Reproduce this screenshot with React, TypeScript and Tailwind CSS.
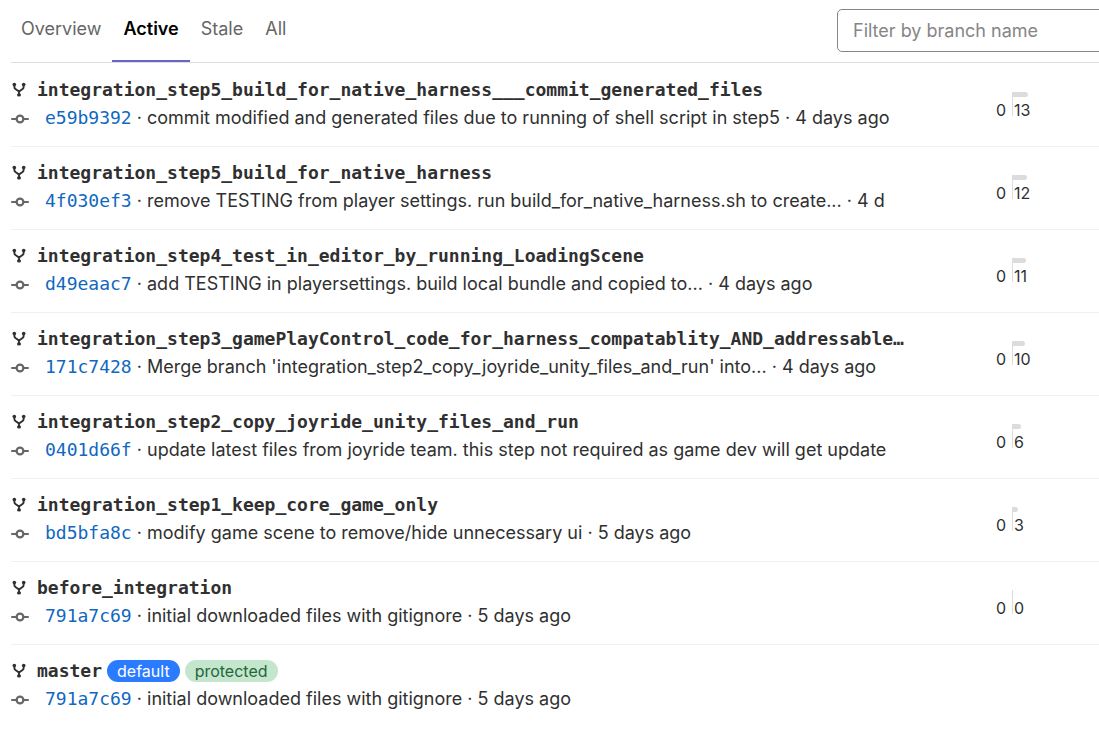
type Branch = {
  name: string;
  sha: string;
  message: string;
  age: string;
  ahead?: number;
  labels?: boolean;
};

const branches: Branch[] = [
  { name: "integration_step5_build_for_native_harness___commit_generated_files", sha: "e59b9392", message: "commit modified and generated files due to running of shell script in step5", age: "4 days ago", ahead: 13 },
  { name: "integration_step5_build_for_native_harness", sha: "4f030ef3", message: "remove TESTING from player settings. run build_for_native_harness.sh to create...", age: "4 d", ahead: 12 },
  { name: "integration_step4_test_in_editor_by_running_LoadingScene", sha: "d49eaac7", message: "add TESTING in playersettings. build local bundle and copied to...", age: "4 days ago", ahead: 11 },
  { name: "integration_step3_gamePlayControl_code_for_harness_compatablity_AND_addressable…", sha: "171c7428", message: "Merge branch 'integration_step2_copy_joyride_unity_files_and_run' into...", age: "4 days ago", ahead: 10 },
  { name: "integration_step2_copy_joyride_unity_files_and_run", sha: "0401d66f", message: "update latest files from joyride team. this step not required as game dev will get update", age: "", ahead: 6 },
  { name: "integration_step1_keep_core_game_only", sha: "bd5bfa8c", message: "modify game scene to remove/hide unnecessary ui", age: "5 days ago", ahead: 3 },
  { name: "before_integration", sha: "791a7c69", message: "initial downloaded files with gitignore", age: "5 days ago", ahead: 0 },
  { name: "master", sha: "791a7c69", message: "initial downloaded files with gitignore", age: "5 days ago", labels: true },
];

const tabs = ["Overview", "Active", "Stale", "All"];

function BranchIcon() {
  return (
    <svg className="h-4 w-4 shrink-0 text-[#303030]" viewBox="0 0 16 16" fill="none" aria-hidden="true">
      <path d="M3.4 3v1.9c0 1 .3 1.6 1.1 2.2L8 9.6l3.5-2.5c.8-.6 1.1-1.2 1.1-2.2V3M8 9V13.5" stroke="currentColor" strokeWidth="1.9" />
      <circle cx="3.3" cy="2.6" r="1.8" fill="currentColor" />
      <circle cx="12.7" cy="2.6" r="1.8" fill="currentColor" />
      <ellipse cx="8" cy="12.9" rx="2" ry="1.6" fill="currentColor" />
    </svg>
  );
}

function CommitIcon() {
  return (
    <svg className="h-[18px] w-[18px] shrink-0 text-[#666666]" viewBox="0 0 18 18" fill="none" aria-hidden="true">
      <path d="M1 9h4.8M12.2 9H17" stroke="currentColor" strokeWidth="2" strokeLinecap="round" />
      <circle cx="9" cy="9" r="3.4" stroke="currentColor" strokeWidth="2.2" />
    </svg>
  );
}

function Divergence({ ahead }: { ahead: number }) {
  return (
    <div className="flex h-6 text-base leading-6 text-[#303030]">
      <span className="w-[26px] pt-1.5 pr-1.5 text-right">0</span>
      <div className="relative border-l border-[#dcdcdc] pl-px">
        <div
          className="absolute top-0 left-0 h-[5px] rounded-r-full bg-[#dcdcdc]"
          style={{ width: ahead === 0 ? 0 : Math.round(ahead + 1.6) }}
        />
        <span className="block pt-1.5">{ahead}</span>
      </div>
    </div>
  );
}

function BranchRow({ branch }: { branch: Branch }) {
  return (
    <li className="flex border-b border-[#f0f0f0] pt-3 pb-[14px] last:border-b-0">
      <div className="w-[900px] shrink-0 overflow-hidden whitespace-nowrap">
        <div className="flex h-7 items-center">
          <span className="flex w-[26px] shrink-0">
            <BranchIcon />
          </span>
          <a href="#" className="font-['DejaVu_Sans_Mono',monospace] text-lg leading-7 font-bold text-[#303030]">{branch.name}</a>
          {branch.labels && (
            <span className="ml-[5px] flex gap-[5px] text-base leading-[22px]">
              <span className="rounded-full bg-[#2a7bff] px-2.5 text-white">default</span>
              <span className="rounded-full bg-[#c3e6cd] px-2.5 text-[#24663b]">protected</span>
            </span>
          )}
        </div>
        <div className="flex h-7 items-center text-lg leading-7 text-[#303030]">
          <span className="flex w-[34px] shrink-0 pt-0.5">
            <CommitIcon />
          </span>
          <a href="#" className="font-['DejaVu_Sans_Mono',monospace] text-[#1068bf]">{branch.sha}</a>
          <span className="whitespace-pre"> · {branch.message}{branch.age && ` · ${branch.age}`}</span>
        </div>
      </div>
      {branch.ahead !== undefined && (
        <div className="ml-[75px] pt-4">
          <Divergence ahead={branch.ahead} />
        </div>
      )}
    </li>
  );
}

export default function App() {
  return (
    <main className="min-h-screen overflow-hidden bg-white pl-[11px] font-['Inter',sans-serif]">
      <header className="flex items-start justify-between border-b border-[#dcdcdc]">
        <nav className="flex text-lg leading-7" aria-label="Branch lists">
          {tabs.map((tab) => (
            <a
              key={tab}
              href="#"
              className={
                tab === "Active"
                  ? "border-b-2 border-[#6666c4] px-[11px] pt-[15px] pb-[17px] font-semibold text-black"
                  : "px-[11px] pt-[15px] pb-[17px] text-[#666666] first:pl-2.5"
              }
            >
              {tab}
            </a>
          ))}
        </nav>
        <div className="mt-[9px] -mr-1.5">
          <input
            type="text"
            aria-label="Filter by branch name"
            placeholder="Filter by branch name"
            className="block h-[43px] w-[268px] rounded-[5px] border border-[#868686] px-[15px] text-lg leading-7 text-[#303030] placeholder:text-[#868686]"
          />
        </div>
      </header>
      <ul className="pt-px">
        {branches.map((branch) => (
          <BranchRow key={branch.name} branch={branch} />
        ))}
      </ul>
    </main>
  );
}
